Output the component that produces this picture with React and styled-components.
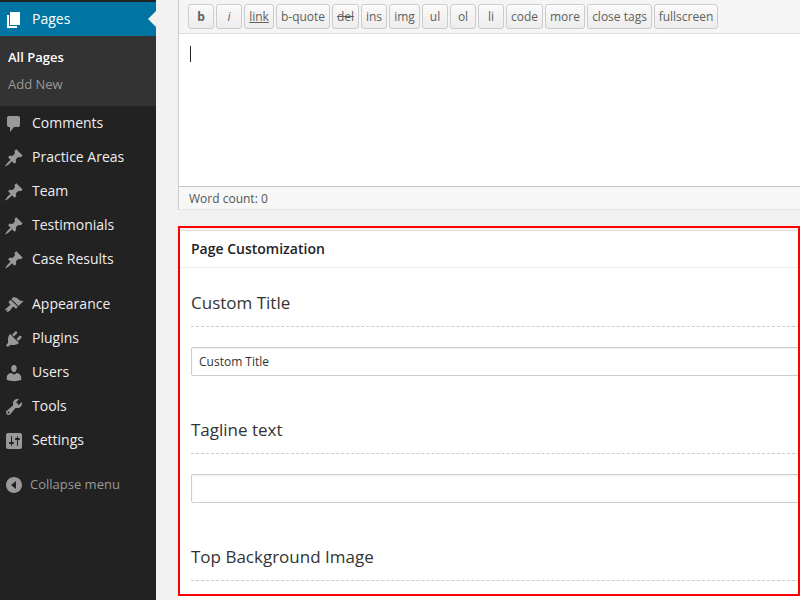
import React from "react";
import styled, { createGlobalStyle } from "styled-components";

const GlobalStyle = createGlobalStyle`
  html, body {
    margin: 0;
    padding: 0;
    width: 800px;
    height: 600px;
    overflow: hidden;
    background: #f1f1f1;
    font-family: "Open Sans", sans-serif;
  }
`;

const Shell = styled.div`
  display: flex;
  width: 800px;
  height: 600px;
  overflow: hidden;
`;

const Sidebar = styled.nav`
  flex: 0 0 156px;
  background: #222;
  padding-top: 2px;
`;

const CurrentItem = styled.a`
  position: relative;
  display: flex;
  align-items: center;
  height: 34px;
  padding-bottom: 2px;
  box-sizing: border-box;
  background: #0074a2;
  color: #fff;
  font-size: 14px;

  &::after {
    content: "";
    position: absolute;
    right: 0;
    top: 9px;
    border: 8px solid transparent;
    border-right-color: #f1f1f1;
  }
`;

const SubMenu = styled.div`
  display: flex;
  flex-direction: column;
  height: 70px;
  padding: 8px 0 0 8px;
  box-sizing: border-box;
  background: #333;
`;

const SubItem = styled.a`
  height: 27px;
  line-height: 27px;
  font-size: 13px;
  font-weight: ${(p) => (p.$active ? 600 : 400)};
  color: ${(p) => (p.$active ? "#fff" : "#999")};
`;

const MenuItem = styled.a`
  display: flex;
  align-items: center;
  height: 34px;
  padding-bottom: 2px;
  box-sizing: border-box;
  color: #eee;
  font-size: 14px;
`;

const MenuGroup = styled.div`
  margin-bottom: ${(p) => p.$gap || 0}px;
`;

const IconSlot = styled.svg`
  flex: 0 0 20px;
  width: 20px;
  height: 20px;
  margin: 4px 8px 0 4px;
  fill: ${(p) => p.$color || "#999"};
`;

const CollapseRow = styled.div`
  display: flex;
  align-items: center;
  height: 34px;
  margin-top: 10px;
  color: #999;
  font-size: 13px;

  svg {
    margin: 2px 6px 0 4px;
  }
`;

const Main = styled.main`
  flex: 1;
  min-width: 0;
  padding-left: 22px;
`;

const Editor = styled.section`
  border-left: 1px solid #ccc;
  border-bottom: 1px solid #e5e5e5;
  background: #fff;
`;

const Toolbar = styled.div`
  display: flex;
  gap: 2px;
  height: 29px;
  padding: 4px 0 0 9px;
  background: #f5f5f5;
  border-bottom: 1px solid #dedede;
`;

const ToolButton = styled.button`
  width: ${(p) => p.$w}px;
  height: 25px;
  padding: 0;
  box-sizing: border-box;
  border: 1px solid #ccc;
  border-radius: 3px;
  background: linear-gradient(to bottom, #fafafa, #ececec);
  box-shadow: inset 0 1px 0 #fff;
  color: #5f5f5f;
  font-family: "Open Sans", sans-serif;
  font-size: 12px;
  line-height: 21px;
  font-weight: ${(p) => (p.$bold ? 700 : 400)};
  font-style: ${(p) => (p.$italic ? "italic" : "normal")};
  text-decoration: ${(p) => p.$decor || "none"};
`;

const EditArea = styled.div`
  height: 153px;
  padding: 12px 11px;
  box-sizing: border-box;
  border-bottom: 1px solid #c4c4c4;
`;

const Caret = styled.div`
  width: 1px;
  height: 16px;
  background: #222;
`;

const StatusBar = styled.div`
  height: 22px;
  padding-left: 10px;
  background: #f7f7f7;
  color: #555;
  font-size: 12px;
  line-height: 24px;
`;

const Panel = styled.section`
  position: relative;
  margin: 20px 0 0 1px;
  height: 400px;
  border-top: 1px solid #e5e5e5;
  background: #fff;
`;

const RedFrame = styled.div`
  position: absolute;
  top: -5px;
  left: -1px;
  width: 622px;
  height: 370px;
  box-sizing: border-box;
  border: 2px solid #f00;
  pointer-events: none;
`;

const PanelHeader = styled.h2`
  margin: 0;
  height: 36px;
  padding-left: 12px;
  border-bottom: 1px solid #eee;
  color: #222;
  font-size: 14px;
  font-weight: 600;
  line-height: 36px;
`;

const FieldGroup = styled.div`
  padding: 20px 0 19px 12px;
`;

const FieldTitle = styled.h3`
  margin: 0 0 20px;
  height: 38px;
  border-bottom: 1px dashed #ccc;
  color: #333;
  font-size: 17px;
  font-weight: 400;
  line-height: 30px;
`;

const FieldInput = styled.input`
  display: block;
  width: 640px;
  height: 29px;
  padding: 0 7px;
  box-sizing: border-box;
  border: 1px solid #ccc;
  border-radius: 2px;
  box-shadow: inset 0 1px 2px rgba(0, 0, 0, 0.07);
  color: #333;
  font-family: "Open Sans", sans-serif;
  font-size: 12px;
  outline: none;
`;

const paths = {
  page: "M6 15V2h10v13H6zm-1 1h8v2H3V5h2v11z",
  comment:
    "M5 2h9q.82 0 1.41.59T16 4v7q0 .82-.59 1.41T14 13h-4l-4 5v-5H5q-.82 0-1.41-.59T3 11V4q0-.82.59-1.41T5 2z",
  pin: "M10.44 3.02l1.82-1.82 6.36 6.35-1.83 1.82c-1.05-.68-2.48-.57-3.41.36l-.75.75c-.92.93-1.04 2.35-.35 3.41l-1.83 1.82-2.41-2.41-2.8 2.79c-.42.42-3.38 2.71-3.8 2.29s1.86-3.39 2.28-3.81l2.79-2.79L4.1 9.36l1.83-1.82c1.05.69 2.48.57 3.4-.36l.75-.75c.93-.92 1.05-2.35.36-3.41z",
  brush:
    "M14.48 11.06L7.41 3.99l1.5-1.5c.5-.56 2.3-.47 3.51.32 1.21.8 1.43 1.28 2.91 2.1 1.18.64 2.45 1.26 4.45.85zm-.71.71L6.7 4.7 4.93 6.47c-.39.39-.39 1.02 0 1.41l1.06 1.06c.39.39.39 1.03 0 1.42-.6.6-1.43 1.11-2.21 1.69-.35.26-.7.53-1.01.84C1.43 13.23.99 14.4 1.27 15.1c.28.7 1.45.27 2.79-1.07-1.34 1.34-1.77 2.51-1.07 2.79.7.28 1.87-.16 3.21-1.5.31-.31.58-.66.84-1.01.58-.78 1.09-1.61 1.69-2.21.39-.39 1.03-.39 1.42 0l1.06 1.06c.39.39 1.02.39 1.41 0z",
  plug: "M13.11 4.36L9.87 7.6 8 5.73l3.24-3.24c.35-.34 1.05-.2 1.56.32.52.51.66 1.21.31 1.55zm-8 1.77l.91-1.12 9.01 9.01-1.19.84c-.71.71-2.63 1.16-3.82 1.16H6.14L4.9 17.26c-.59.59-1.54.59-2.12 0-.59-.58-.59-1.53 0-2.12l1.24-1.24v-3.88c0-1.13.4-3.19 1.09-3.89zm7.26 3.97l3.24-3.24c.34-.35 1.04-.21 1.55.31.52.51.66 1.21.31 1.55l-3.24 3.25z",
  user: "M10 9.25c-2.27 0-2.73-3.44-2.73-3.44C7 4.02 7.82 2 9.97 2c2.16 0 2.98 2.02 2.71 3.81 0 0-.41 3.44-2.68 3.44zm0 2.57L12.72 10c2.39 0 4.52 2.33 4.52 4.53v2.49s-3.65 1.13-7.24 1.13c-3.65 0-7.24-1.13-7.24-1.13v-2.49c0-2.25 1.94-4.48 4.47-4.48z",
  wrench:
    "M16.68 9.77c-1.34 1.34-3.3 1.67-4.95.99l-5.41 6.52c-.99.99-2.59.99-3.58 0s-.99-2.59 0-3.57l6.52-5.42c-.68-1.65-.35-3.61.99-4.95 1.28-1.28 3.12-1.62 4.72-1.06l-2.89 2.89 2.82 2.82 2.86-2.87c.53 1.58.18 3.39-1.08 4.65zM3.81 16.21c.4.39 1.04.39 1.43 0 .4-.4.4-1.04 0-1.43-.39-.4-1.03-.4-1.43 0-.39.39-.39 1.03 0 1.43z",
  sliders:
    "M18 16V4c0-1.1-.9-2-2-2H4c-1.1 0-2 .9-2 2v12c0 1.1.9 2 2 2h12c1.1 0 2-.9 2-2zM8 11h1c.55 0 1 .45 1 1s-.45 1-1 1H8v1.5c0 .28-.22.5-.5.5s-.5-.22-.5-.5V13H6c-.55 0-1-.45-1-1s.45-1 1-1h1V5.5c0-.28.22-.5.5-.5s.5.22.5.5V11zm5-2h-1c-.55 0-1-.45-1-1s.45-1 1-1h1V5.5c0-.28.22-.5.5-.5s.5.22.5.5V7h1c.55 0 1 .45 1 1s-.45 1-1 1h-1v5.5c0 .28-.22.5-.5.5s-.5-.22-.5-.5V9z",
  collapse:
    "M10 2.02c4.4 0 7.98 3.58 7.98 7.98S14.4 17.98 10 17.98 2.02 14.4 2.02 10 5.6 2.02 10 2.02zM12 6l-5 4 5 4V6z",
};

function Icon({ name, color }) {
  return (
    <IconSlot viewBox="0 0 20 20" $color={color}>
      <path d={paths[name]} />
    </IconSlot>
  );
}

const contentItems = [
  ["comment", "Comments"],
  ["pin", "Practice Areas"],
  ["pin", "Team"],
  ["pin", "Testimonials"],
  ["pin", "Case Results"],
];

const adminItems = [
  ["brush", "Appearance"],
  ["plug", "Plugins"],
  ["user", "Users"],
  ["wrench", "Tools"],
  ["sliders", "Settings"],
];

const buttons = [
  { label: "b", w: 26, $bold: true },
  { label: "i", w: 26, $italic: true },
  { label: "link", w: 30, $decor: "underline" },
  { label: "b-quote", w: 54 },
  { label: "del", w: 27, $decor: "line-through" },
  { label: "ins", w: 26 },
  { label: "img", w: 31 },
  { label: "ul", w: 26 },
  { label: "ol", w: 26 },
  { label: "li", w: 26 },
  { label: "code", w: 37 },
  { label: "more", w: 40 },
  { label: "close tags", w: 65 },
  { label: "fullscreen", w: 64 },
];

function Field({ title, value }) {
  return (
    <FieldGroup>
      <FieldTitle>{title}</FieldTitle>
      {value !== undefined && <FieldInput readOnly value={value} />}
    </FieldGroup>
  );
}

export default function App() {
  return (
    <>
      <GlobalStyle />
      <Shell>
        <Sidebar>
          <CurrentItem>
            <Icon name="page" color="#fff" />
            Pages
          </CurrentItem>
          <SubMenu>
            <SubItem $active>All Pages</SubItem>
            <SubItem>Add New</SubItem>
          </SubMenu>
          <MenuGroup $gap={11}>
            {contentItems.map(([icon, label]) => (
              <MenuItem key={label}>
                <Icon name={icon} />
                {label}
              </MenuItem>
            ))}
          </MenuGroup>
          <MenuGroup>
            {adminItems.map(([icon, label]) => (
              <MenuItem key={label}>
                <Icon name={icon} />
                {label}
              </MenuItem>
            ))}
          </MenuGroup>
          <CollapseRow>
            <Icon name="collapse" />
            Collapse menu
          </CollapseRow>
        </Sidebar>
        <Main>
          <Editor>
            <Toolbar>
              {buttons.map(({ label, w, ...rest }) => (
                <ToolButton key={label} $w={w} {...rest}>
                  {label}
                </ToolButton>
              ))}
            </Toolbar>
            <EditArea>
              <Caret />
            </EditArea>
            <StatusBar>Word count: 0</StatusBar>
          </Editor>
          <Panel>
            <RedFrame />
            <PanelHeader>Page Customization</PanelHeader>
            <Field title="Custom Title" value="Custom Title" />
            <Field title="Tagline text" value="" />
            <Field title="Top Background Image" />
          </Panel>
        </Main>
      </Shell>
    </>
  );
}
